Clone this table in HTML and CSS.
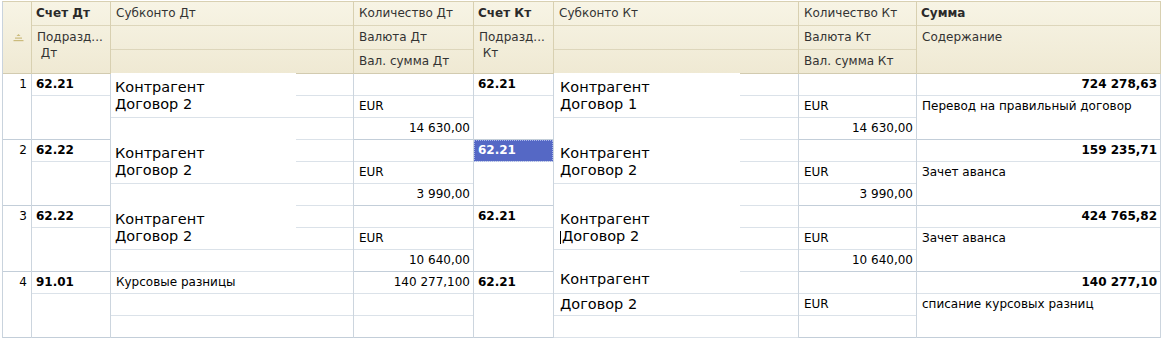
FILE: index.html
```html
<!DOCTYPE html>
<html lang="ru">
<head>
<meta charset="utf-8">
<title>Проводки</title>
<link rel="stylesheet" href="styles.css">
</head>
<body>
<div class="grid">
  <div class="rec hdr">
    <div class="col w0"><div class="cell full icon-cell">
      <svg width="11" height="8" viewBox="0 0 11 8"><path d="M5.5 0 L7.5 2 L3.5 2 Z" fill="#cbbb7c"/><rect x="2" y="3.5" width="7" height="1.2" fill="#cbbb7c"/><rect x="0.5" y="6" width="10" height="1.2" fill="#cbbb7c"/></svg>
    </div></div>
    <div class="col w1"><div class="cell b">Счет Дт</div><div class="cell tall">Подразд...<br>&nbsp;Дт</div></div>
    <div class="col w2"><div class="cell">Субконто Дт</div><div class="cell"></div><div class="cell"></div></div>
    <div class="col w3"><div class="cell">Количество Дт</div><div class="cell">Валюта Дт</div><div class="cell">Вал. сумма Дт</div></div>
    <div class="col w4"><div class="cell b">Счет Кт</div><div class="cell tall">Подразд...<br>&nbsp;Кт</div></div>
    <div class="col w5"><div class="cell">Субконто Кт</div><div class="cell"></div><div class="cell"></div></div>
    <div class="col w6"><div class="cell">Количество Кт</div><div class="cell">Валюта Кт</div><div class="cell">Вал. сумма Кт</div></div>
    <div class="col w7"><div class="cell b">Сумма</div><div class="cell tall">Содержание</div></div>
  </div>

  <div class="rec">
    <div class="col w0"><div class="cell full r">1</div></div>
    <div class="col w1"><div class="cell b">62.21</div><div class="cell tall"></div></div>
    <div class="col w2"><div class="cell"></div><div class="cell"></div><div class="cell"></div>
      <div class="paste">Контрагент<br>Договор 2</div></div>
    <div class="col w3"><div class="cell"></div><div class="cell">EUR</div><div class="cell r">14 630,00</div></div>
    <div class="col w4"><div class="cell b">62.21</div><div class="cell tall"></div></div>
    <div class="col w5"><div class="cell"></div><div class="cell"></div><div class="cell"></div>
      <div class="paste kt">Контрагент<br>Договор 1</div></div>
    <div class="col w6"><div class="cell"></div><div class="cell">EUR</div><div class="cell r">14 630,00</div></div>
    <div class="col w7"><div class="cell r b">724 278,63</div><div class="cell tall">Перевод на правильный договор</div></div>
  </div>

  <div class="rec">
    <div class="col w0"><div class="cell full r">2</div></div>
    <div class="col w1"><div class="cell b">62.22</div><div class="cell tall"></div></div>
    <div class="col w2"><div class="cell"></div><div class="cell"></div><div class="cell"></div>
      <div class="paste">Контрагент<br>Договор 2</div></div>
    <div class="col w3"><div class="cell"></div><div class="cell">EUR</div><div class="cell r">3 990,00</div></div>
    <div class="col w4"><div class="cell b sel">62.21</div><div class="cell tall"></div></div>
    <div class="col w5"><div class="cell"></div><div class="cell"></div><div class="cell"></div>
      <div class="paste kt">Контрагент<br>Договор 2</div></div>
    <div class="col w6"><div class="cell"></div><div class="cell">EUR</div><div class="cell r">3 990,00</div></div>
    <div class="col w7"><div class="cell r b">159 235,71</div><div class="cell tall">Зачет аванса</div></div>
  </div>

  <div class="rec">
    <div class="col w0"><div class="cell full r">3</div></div>
    <div class="col w1"><div class="cell b">62.22</div><div class="cell tall"></div></div>
    <div class="col w2"><div class="cell"></div><div class="cell"></div><div class="cell"></div>
      <div class="paste">Контрагент<br>Договор 2</div></div>
    <div class="col w3"><div class="cell"></div><div class="cell">EUR</div><div class="cell r">10 640,00</div></div>
    <div class="col w4"><div class="cell b">62.21</div><div class="cell tall"></div></div>
    <div class="col w5"><div class="cell"></div><div class="cell"></div><div class="cell"></div>
      <div class="paste kt">Контрагент<br><span class="caret"></span>Договор 2</div></div>
    <div class="col w6"><div class="cell"></div><div class="cell">EUR</div><div class="cell r">10 640,00</div></div>
    <div class="col w7"><div class="cell r b">424 765,82</div><div class="cell tall">Зачет аванса</div></div>
  </div>

  <div class="rec">
    <div class="col w0"><div class="cell full r">4</div></div>
    <div class="col w1"><div class="cell b">91.01</div><div class="cell tall"></div></div>
    <div class="col w2"><div class="cell">Курсовые разницы</div><div class="cell"></div><div class="cell"></div></div>
    <div class="col w3"><div class="cell r">140 277,100</div><div class="cell"></div><div class="cell"></div></div>
    <div class="col w4"><div class="cell b">62.21</div><div class="cell tall"></div></div>
    <div class="col w5"><div class="cell"></div><div class="cell"></div><div class="cell"></div>
      <div class="paste kt loose">Контрагент<br>Договор 2</div></div>
    <div class="col w6"><div class="cell"></div><div class="cell">EUR</div><div class="cell"></div></div>
    <div class="col w7"><div class="cell r b">140 277,10</div><div class="cell tall">списание курсовых разниц</div></div>
  </div>
</div>
</body>
</html>
```

FILE: styles.css
```css
* { box-sizing: border-box; margin: 0; padding: 0; }

body {
  margin: 0;
  background: #ffffff;
  font-family: "DejaVu Sans", "Liberation Sans", sans-serif;
  font-size: 12px;
  color: #000;
}

.grid {
  margin: 1px 0 0 2px;
  width: 1159px;
  border-left: 1px solid #c9d3dd;
  border-top: 1px solid #d8d0b2;
}

.rec { display: flex; }

.col {
  position: relative;
  display: flex;
  flex-direction: column;
  border-right: 1px solid #ccd5de;
}

.w0 { width: 29px; }
.w1 { width: 79px; }
.w2 { width: 243px; }
.w3 { width: 120px; }
.w4 { width: 80px; }
.w5 { width: 245px; }
.w6 { width: 118px; }
.w7 { width: 244px; }

.cell {
  height: 22px;
  line-height: 21px;
  padding: 0 4px 0 5px;
  border-bottom: 1px solid #dbe2e9;
  white-space: nowrap;
  overflow: hidden;
}
.col > .cell:last-child { border-bottom-color: #c3ced9; }
.cell.tall { height: 44px; }
.cell.full { height: 66px; }

.b { font-weight: bold; padding-left: 4px; }
.r { text-align: right; padding-right: 3px; }
.w0 .r { padding-right: 4px; }

.sel {
  background: #5568c5;
  color: #fff;
  outline: 1px dotted #aab6ea;
  outline-offset: -1px;
}

/* header */
.hdr .col {
  border-right-color: #d8d0b1;
  background: linear-gradient(#f7f4e5, #efe9d3);
}
.hdr .cell {
  height: 24px;
  line-height: 23px;
  color: #333;
  border-bottom-color: #ddd6bb;
}
.hdr .b { color: #2a2a2a; }
.hdr .col > .cell:last-child { border-bottom-color: #d2cbb0; }
.hdr .cell.tall {
  height: 48px;
  line-height: 16px;
  padding-top: 3px;
  white-space: normal;
}
.hdr .cell.full { height: 72px; }
.icon-cell {
  display: flex;
  align-items: center;
  justify-content: center;
  padding: 0 0 0 3px;
}

/* pasted text patches lying over the grid lines */
.paste {
  position: absolute;
  top: -1px;
  left: 0;
  width: 185px;
  height: 44px;
  background: #fff;
  padding: 6px 0 0 4px;
  font-size: 14.5px;
  line-height: 17px;
  white-space: nowrap;
  z-index: 1;
}
.paste.kt { width: 186px; padding-left: 6px; }
.paste.loose {
  top: -5px;
  height: 6px;
  padding-top: 0;
  line-height: 25px;
  overflow: visible;
}

.caret {
  display: inline-block;
  width: 1px;
  height: 13px;
  margin-right: 1px;
  background: #000;
  vertical-align: -3px;
}
```
